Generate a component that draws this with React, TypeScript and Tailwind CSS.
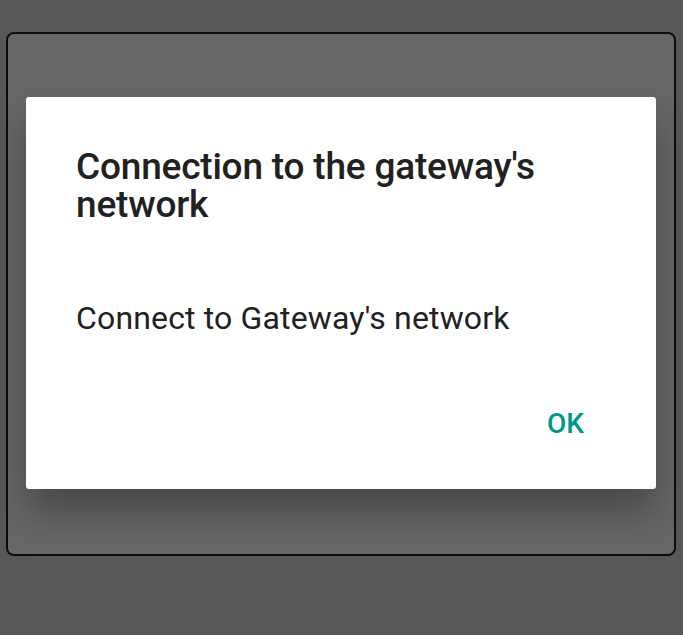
import React from "react";

export default function App() {
  return (
    <div className="w-[683px] h-[635px] bg-[#585858] pt-[32px] pl-[6px] overflow-hidden" style={{ fontFamily: "Roboto, 'Noto Sans', sans-serif" }}>
      <div className="w-[670px] h-[524px] border-2 border-[#0d0d0d] rounded-[8px] bg-[#676767] pt-[63px] pl-[18px]">
        <div className="w-[630px] h-[392px] bg-white rounded-[3px] shadow-[0_24px_40px_rgba(0,0,0,0.3)] flex flex-col pt-[51px] pl-[50px] pr-[72px]">
          <div className="text-[37px] leading-[38px] font-medium text-[#212121] tracking-[-0.2px]">
            Connection to the gateway's network
          </div>
          <div className="mt-[74px] text-[32px] leading-[40px] text-[#212121] tracking-[0.15px]">
            Connect to Gateway's network
          </div>
          <div className="mt-[70px] flex justify-end">
            <span className="text-[28px] leading-[32px] font-medium text-[#009688]">OK</span>
          </div>
        </div>
      </div>
    </div>
  );
}
